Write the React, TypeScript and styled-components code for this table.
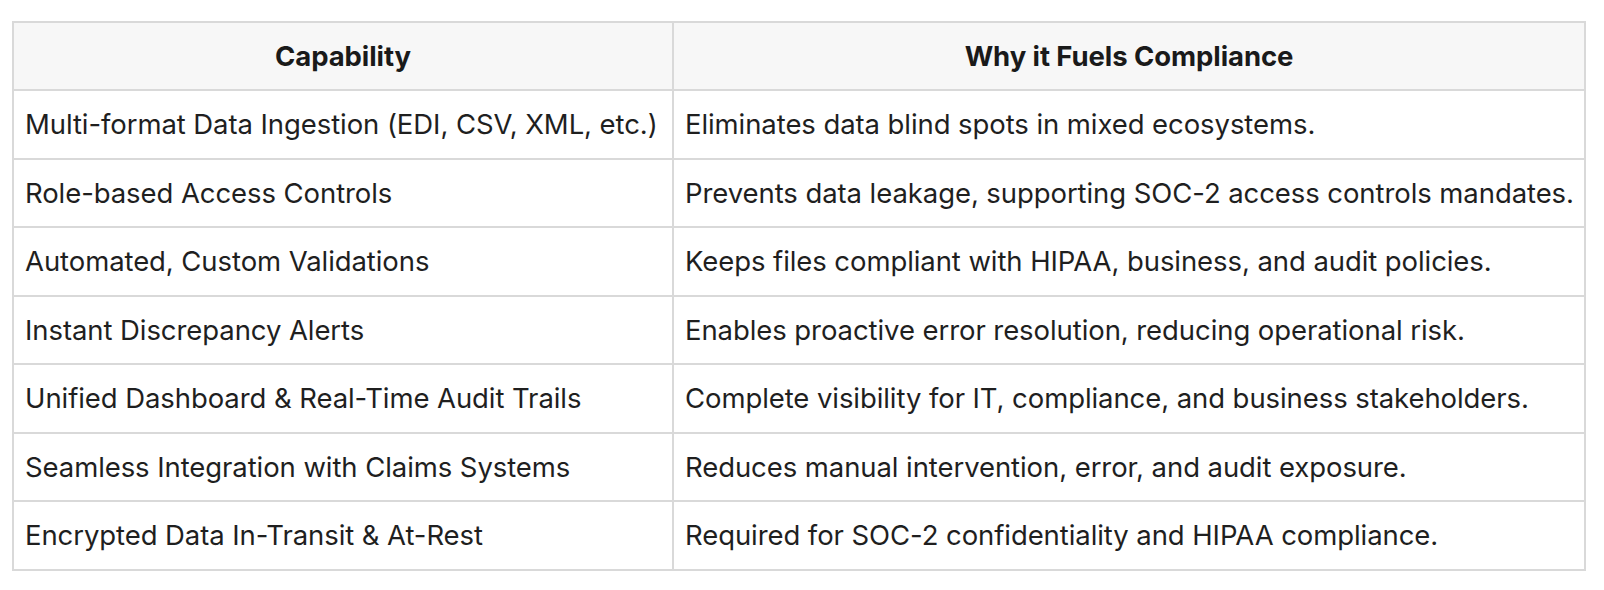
import styled, { createGlobalStyle } from "styled-components";

const GlobalStyle = createGlobalStyle`
  body {
    margin: 0;
    background: #ffffff;
    font-family: Inter, "Noto Sans", "Liberation Sans", sans-serif;
    color: #1f1f1f;
  }
`;

const Page = styled.div`
  padding: 21px 18px 20px 12px;
`;

const Table = styled.table`
  width: 1574px;
  border-collapse: collapse;
  table-layout: fixed;
  font-size: 27.5px;
  letter-spacing: -0.08px;
`;

const HeadCell = styled.th`
  background: #f7f7f7;
  border: 2px solid #d9d9d9;
  height: 68px;
  padding: 0 11px;
  font-weight: 700;
  color: #1a1a1a;
  text-align: center;
  box-sizing: border-box;
`;

const Cell = styled.td`
  border: 2px solid #d9d9d9;
  height: 66.5px;
  padding: 0 11px;
  text-align: left;
  white-space: nowrap;
  color: #1f1f1f;
`;

const rows: [string, string][] = [
  ["Multi-format Data Ingestion (EDI, CSV, XML, etc.)", "Eliminates data blind spots in mixed ecosystems."],
  ["Role-based Access Controls", "Prevents data leakage, supporting SOC-2 access controls mandates."],
  ["Automated, Custom Validations", "Keeps files compliant with HIPAA, business, and audit policies."],
  ["Instant Discrepancy Alerts", "Enables proactive error resolution, reducing operational risk."],
  ["Unified Dashboard & Real-Time Audit Trails", "Complete visibility for IT, compliance, and business stakeholders."],
  ["Seamless Integration with Claims Systems", "Reduces manual intervention, error, and audit exposure."],
  ["Encrypted Data In-Transit & At-Rest", "Required for SOC-2 confidentiality and HIPAA compliance."],
];

const App = () => (
  <Page>
    <GlobalStyle />
    <Table>
      <colgroup>
        <col style={{ width: 660 }} />
        <col />
      </colgroup>
      <thead>
        <tr>
          <HeadCell>Capability</HeadCell>
          <HeadCell>Why it Fuels Compliance</HeadCell>
        </tr>
      </thead>
      <tbody>
        {rows.map(([cap, why]) => (
          <tr key={cap}>
            <Cell>{cap}</Cell>
            <Cell>{why}</Cell>
          </tr>
        ))}
      </tbody>
    </Table>
  </Page>
);

export default App;
